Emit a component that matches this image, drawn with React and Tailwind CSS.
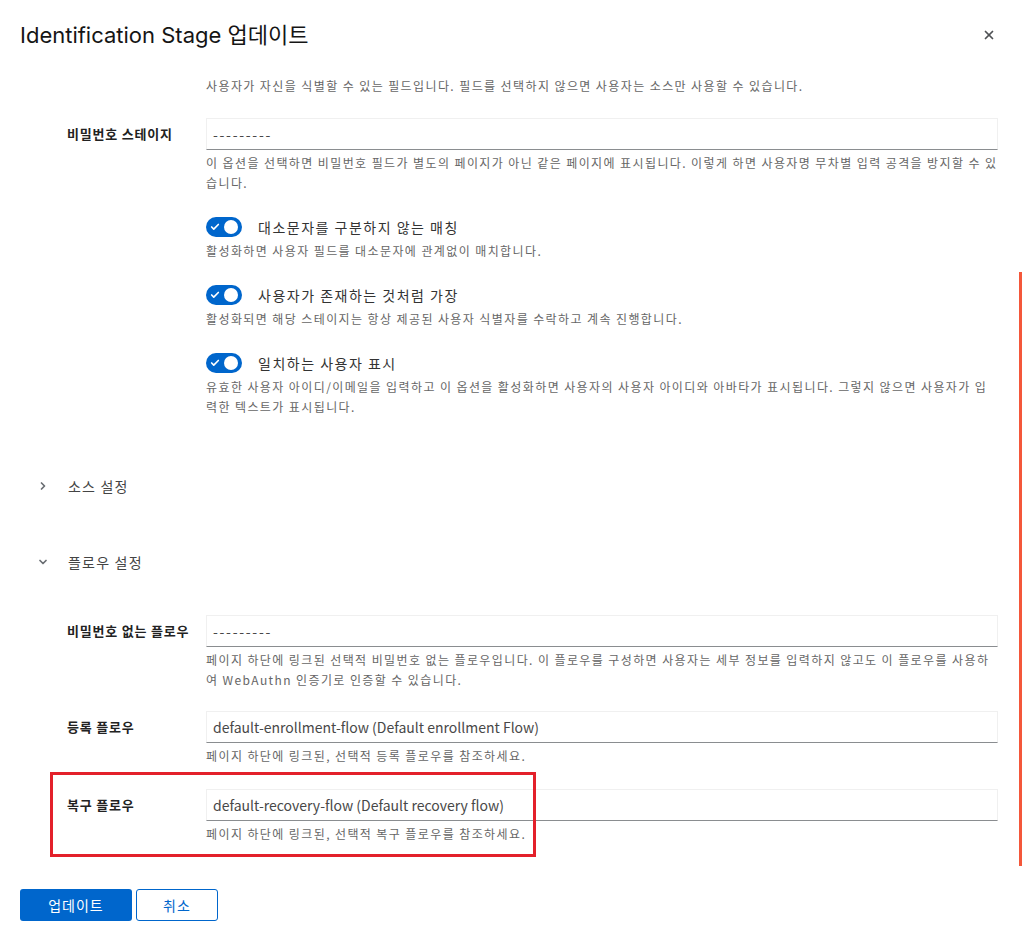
import { ChevronRight, ChevronDown, X, Check } from "lucide-react";

const font = { fontFamily: '"Noto Sans CJK KR", "Noto Sans", sans-serif' };

const Toggle = ({ label, help }) => (
  <div className="mt-6">
    <div className="flex items-center h-5">
      <div className="relative w-9 h-5 rounded-full bg-[#0066cc] flex items-center justify-between px-[4px]">
        <Check size={10} strokeWidth={4} className="text-white" />
        <span className="w-[14px] h-[14px] rounded-full bg-white" />
      </div>
      <span className="ml-4 text-[14px] tracking-[1.5px] text-[#333]">{label}</span>
    </div>
    <p className="mt-1 text-[12px] leading-5 tracking-[1.4px] text-[#666]">{help}</p>
  </div>
);

const Field = ({ label, value, help, className = "" }) => (
  <div className={"flex " + className}>
    <label className="w-[139px] shrink-0 pt-[6px] text-[13px] leading-5 font-bold tracking-[0.8px] text-[#222]">
      {label}
    </label>
    <div className="flex-1">
      <div className="h-8 border border-[#f0f0f0] border-b-[#8a8d90] px-[6px] flex items-center text-[14px] text-[#484848]">
        {value === "---------" ? <span className="tracking-[1.7px]">{value}</span> : value}
      </div>
      <p className="mt-[3px] text-[12px] leading-5 tracking-[1.4px] text-[#666]">{help}</p>
    </div>
  </div>
);

const Section = ({ open, title, className = "" }) => (
  <div className={"flex items-center h-5 pl-[17px] " + className}>
    {open ? (
      <ChevronDown size={12} strokeWidth={3.5} className="text-[#6a6e73]" />
    ) : (
      <ChevronRight size={12} strokeWidth={3.5} className="text-[#6a6e73]" />
    )}
    <span className="ml-[19px] text-[14px] tracking-[1.2px] text-[#444]">{title}</span>
  </div>
);

export default function App() {
  return (
    <div className="relative w-[1024px] h-[942px] overflow-hidden bg-white" style={font}>
      <div className="flex items-center justify-between h-[30px] mt-5 pl-5 pr-[28px]">
        <h1
          className="text-[22px] text-[#151515]"
          style={{ fontFamily: 'Inter, "Noto Sans CJK KR", sans-serif' }}
        >
          Identification Stage 업데이트
        </h1>
        <X size={14} strokeWidth={3} className="text-[#4f5255]" />
      </div>

      <div className="pl-5 pr-[26px]">
        <div className="pl-[47px]">
          <p className="mt-[26px] ml-[139px] text-[12px] leading-5 tracking-[1.4px] text-[#666]">
            사용자가 자신을 식별할 수 있는 필드입니다. 필드를 선택하지 않으면 사용자는 소스만 사용할 수 있습니다.
          </p>

          <Field
            className="mt-[22px]"
            label="비밀번호 스테이지"
            value="---------"
            help="이 옵션을 선택하면 비밀번호 필드가 별도의 페이지가 아닌 같은 페이지에 표시됩니다. 이렇게 하면 사용자명 무차별 입력 공격을 방지할 수 있습니다."
          />

          <div className="ml-[139px]">
            <Toggle
              label="대소문자를 구분하지 않는 매칭"
              help="활성화하면 사용자 필드를 대소문자에 관계없이 매치합니다."
            />
            <Toggle
              label="사용자가 존재하는 것처럼 가장"
              help="활성화되면 해당 스테이지는 항상 제공된 사용자 식별자를 수락하고 계속 진행합니다."
            />
            <Toggle
              label="일치하는 사용자 표시"
              help="유효한 사용자 아이디/이메일을 입력하고 이 옵션을 활성화하면 사용자의 사용자 아이디와 아바타가 표시됩니다. 그렇지 않으면 사용자가 입력한 텍스트가 표시됩니다."
            />
          </div>
        </div>

        <Section className="mt-[59px]" title="소스 설정" />
        <Section className="mt-[56px]" open title="플로우 설정" />

        <div className="pl-[47px]">
          <Field
            className="mt-[43px]"
            label="비밀번호 없는 플로우"
            value="---------"
            help="페이지 하단에 링크된 선택적 비밀번호 없는 플로우입니다. 이 플로우를 구성하면 사용자는 세부 정보를 입력하지 않고도 이 플로우를 사용하여 WebAuthn 인증기로 인증할 수 있습니다."
          />
          <Field
            className="mt-[21px]"
            label="등록 플로우"
            value="default-enrollment-flow (Default enrollment Flow)"
            help="페이지 하단에 링크된, 선택적 등록 플로우를 참조하세요."
          />
          <div className="relative mt-[23px]">
            <Field
              label="복구 플로우"
              value="default-recovery-flow (Default recovery flow)"
              help="페이지 하단에 링크된, 선택적 복구 플로우를 참조하세요."
            />
            <div className="absolute left-[-17px] top-[-17px] w-[486px] h-[85px] border-[3px] border-[#e3202a]" />
          </div>
        </div>

        <div className="flex gap-1 mt-[45px]">
          <button className="w-[112px] h-8 rounded-[3px] bg-[#0066cc] text-white text-[14px] tracking-[1px]">
            업데이트
          </button>
          <button className="w-[82px] h-8 rounded-[3px] border border-[#0066cc] text-[#0066cc] text-[14px] tracking-[1px]">
            취소
          </button>
        </div>
      </div>

      <div className="absolute right-[2px] top-[272px] w-[3px] h-[594px] bg-[#f4573a]" />
    </div>
  );
}
